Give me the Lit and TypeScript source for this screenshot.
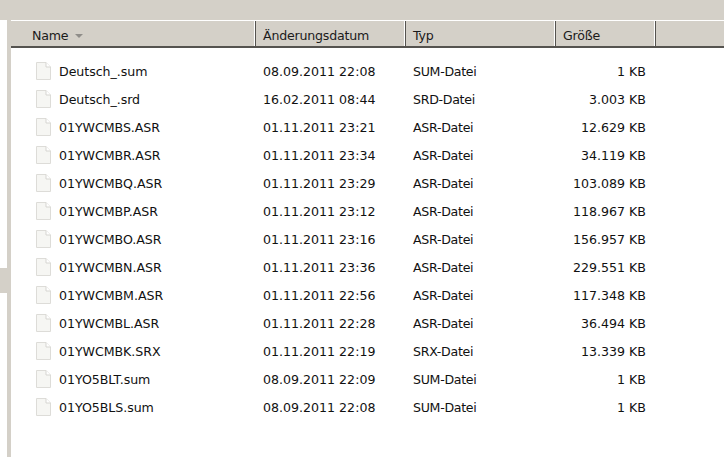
import { LitElement, html, css, svg } from "lit";
import { customElement } from "lit/decorators.js";

const rows = [
  ["Deutsch_.sum", "08.09.2011 22:08", "SUM-Datei", "1 KB"],
  ["Deutsch_.srd", "16.02.2011 08:44", "SRD-Datei", "3.003 KB"],
  ["01YWCMBS.ASR", "01.11.2011 23:21", "ASR-Datei", "12.629 KB"],
  ["01YWCMBR.ASR", "01.11.2011 23:34", "ASR-Datei", "34.119 KB"],
  ["01YWCMBQ.ASR", "01.11.2011 23:29", "ASR-Datei", "103.089 KB"],
  ["01YWCMBP.ASR", "01.11.2011 23:12", "ASR-Datei", "118.967 KB"],
  ["01YWCMBO.ASR", "01.11.2011 23:16", "ASR-Datei", "156.957 KB"],
  ["01YWCMBN.ASR", "01.11.2011 23:36", "ASR-Datei", "229.551 KB"],
  ["01YWCMBM.ASR", "01.11.2011 22:56", "ASR-Datei", "117.348 KB"],
  ["01YWCMBL.ASR", "01.11.2011 22:28", "ASR-Datei", "36.494 KB"],
  ["01YWCMBK.SRX", "01.11.2011 22:19", "SRX-Datei", "13.339 KB"],
  ["01YO5BLT.sum", "08.09.2011 22:09", "SUM-Datei", "1 KB"],
  ["01YO5BLS.sum", "08.09.2011 22:08", "SUM-Datei", "1 KB"],
];

const fileIcon = svg`<svg class="icon" width="15" height="18" viewBox="0 0 15 18">
  <path d="M.5 .5H10L14.5 5V17.5H.5Z" fill="#f6f6f3" stroke="#dddcd8"/>
  <path d="M10 .5V5H14.5" fill="#fff" stroke="#d6d5d1"/>
</svg>`;

@customElement("app-root")
export class AppRoot extends LitElement {
  static styles = css`
    :host {
      display: block;
      width: 724px;
      height: 457px;
      overflow: hidden;
      background: #fff;
      font-family: "DejaVu Sans", "Noto Sans", sans-serif;
      font-size: 12.6px;
      color: #111;
    }
    .top { height: 20px; background: #d4d0c8; }
    .body { display: flex; height: 437px; }
    .side { width: 7px; padding-top: 248px; box-sizing: border-box; }
    .side-block { height: 25px; background: #d4d0c8; }
    .strip { width: 4px; background: #d4d0c8; }
    .main { flex: 1; min-width: 0; }
    .cols { display: grid; grid-template-columns: 245px 150px 150px 100px 1fr; }
    .header {
      height: 28px;
      box-sizing: border-box;
      background: #d4d0c8;
      border-top: 1px solid #fff;
      border-bottom: 2px solid #55534f;
    }
    .hcell {
      display: flex;
      align-items: center;
      gap: 7px;
      padding-left: 7px;
      padding-top: 3px;
      border-right: 1px solid #55534f;
      box-shadow: inset -1px 0 0 #fff;
      color: #1b1b1b;
      box-sizing: border-box;
      letter-spacing: -0.2px;
    }
    .hcell.name { padding-left: 21px; }
    .hcell.last { border-right: none; box-shadow: none; }
    .arrow {
      width: 0; height: 0;
      margin-top: 1px;
      border-left: 4px solid transparent;
      border-right: 4px solid transparent;
      border-top: 4px solid #8f8d89;
    }
    .list { padding-top: 9px; }
    .row { height: 28px; align-items: center; }
    .name-cell { display: flex; align-items: center; gap: 8px; padding-left: 25px; letter-spacing: -0.05px; }
    .icon { display: block; flex: none; }
    .date, .type { padding-left: 7px; }
    .type { letter-spacing: -0.3px; }
    .size { text-align: right; padding-right: 10px; }
  `;

  render() {
    return html`
      <div class="top"></div>
      <div class="body">
        <div class="side"><div class="side-block"></div></div>
        <div class="strip"></div>
        <div class="main">
          <div class="cols header">
            <div class="hcell name">Name <span class="arrow"></span></div>
            <div class="hcell">Änderungsdatum</div>
            <div class="hcell">Typ</div>
            <div class="hcell">Größe</div>
            <div class="hcell last"></div>
          </div>
          <div class="list">
            ${rows.map(
              ([n, d, t, s]) => html`
                <div class="cols row">
                  <div class="name-cell">${fileIcon}<span>${n}</span></div>
                  <div class="date">${d}</div>
                  <div class="type">${t}</div>
                  <div class="size">${s}</div>
                </div>
              `
            )}
          </div>
        </div>
      </div>
    `;
  }
}
